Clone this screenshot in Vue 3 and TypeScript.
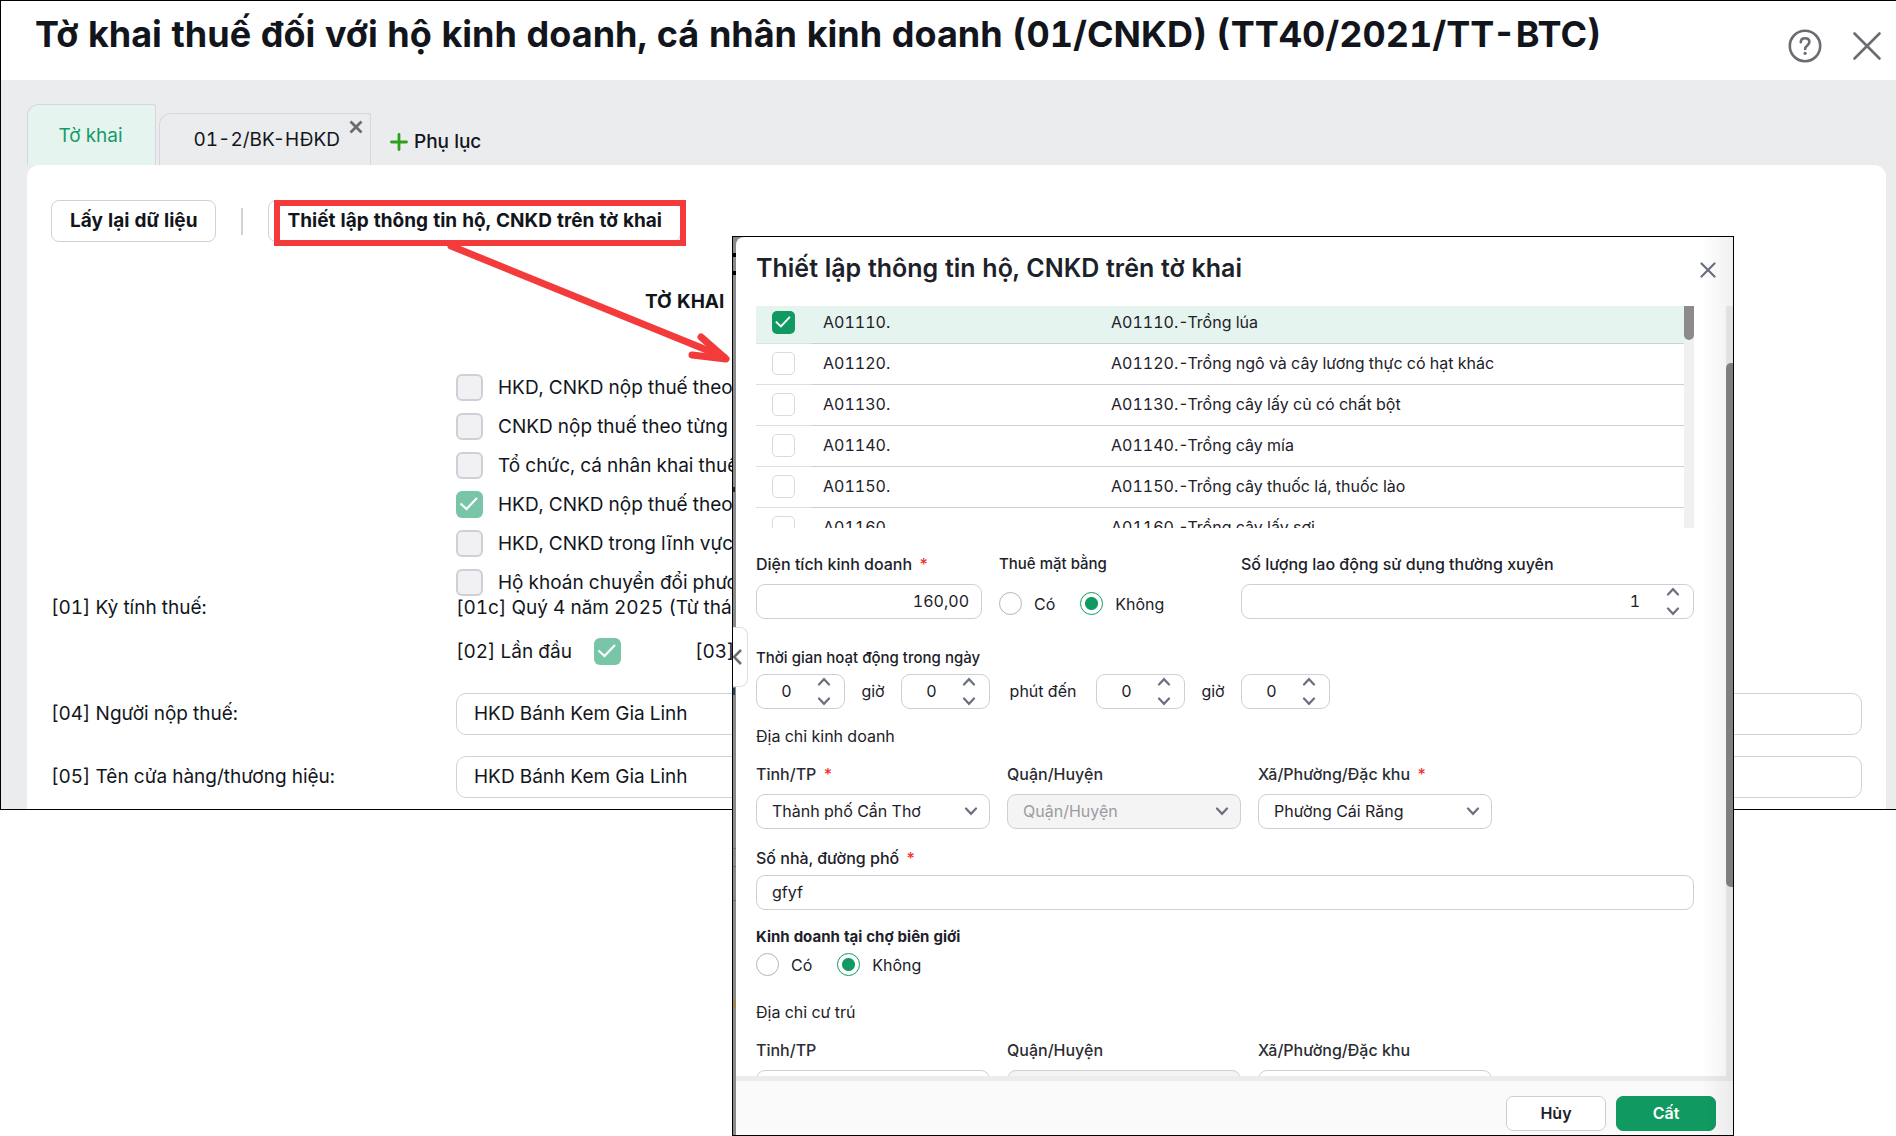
<script setup lang="ts">
import { ref } from 'vue'

interface Option {
  label: string
  checked: boolean
}

interface Industry {
  code: string
  name: string
  checked: boolean
}

const declarationTypes = ref<Option[]>([
  { label: 'HKD, CNKD nộp thuế theo', checked: false },
  { label: 'CNKD nộp thuế theo từng', checked: false },
  { label: 'Tổ chức, cá nhân khai thuế', checked: false },
  { label: 'HKD, CNKD nộp thuế theo', checked: true },
  { label: 'HKD, CNKD trong lĩnh vực', checked: false },
  { label: 'Hộ khoán chuyển đổi phương', checked: false },
])

const industries = ref<Industry[]>([
  { code: 'A01110.', name: 'A01110.-Trồng lúa', checked: true },
  { code: 'A01120.', name: 'A01120.-Trồng ngô và cây lương thực có hạt khác', checked: false },
  { code: 'A01130.', name: 'A01130.-Trồng cây lấy củ có chất bột', checked: false },
  { code: 'A01140.', name: 'A01140.-Trồng cây mía', checked: false },
  { code: 'A01150.', name: 'A01150.-Trồng cây thuốc lá, thuốc lào', checked: false },
  { code: 'A01160.', name: 'A01160.-Trồng cây lấy sợi', checked: false },
])

const taxpayer = ref('HKD Bánh Kem Gia Linh')
const shopName = ref('HKD Bánh Kem Gia Linh')
const area = ref('160,00')
const rent = ref('no')
const border = ref('no')
const workers = ref(1)
const street = ref('gfyf')

const hours = ref([
  { value: 0, unit: 'giờ', name: 'Giờ bắt đầu' },
  { value: 0, unit: 'phút đến', name: 'Phút bắt đầu' },
  { value: 0, unit: 'giờ', name: 'Giờ kết thúc' },
  { value: 0, unit: '', name: 'Phút kết thúc' },
])
</script>

<template>
  <div class="page">
    <main class="window">
      <header class="window-head">
        <h1>Tờ khai thuế đối với hộ kinh doanh, cá nhân kinh doanh (01/CNKD) (TT40/2021/TT-BTC)</h1>
        <div class="window-tools">
          <button class="icon-btn" aria-label="Trợ giúp">
            <svg width="34" height="34" viewBox="0 0 34 34" fill="none" stroke="#6b6c72" stroke-width="2.6">
              <circle cx="17" cy="17" r="15.2" />
              <path d="M12.8 13.2c0-2.500 1.800-4 4.300-4s4.300 1.500 4.300 3.900c0 3.200-4.300 3.500-4.300 6.900" stroke-linecap="round" />
              <circle cx="17.100" cy="24.300" r="1.600" fill="#6b6c72" stroke="none" />
            </svg>
          </button>
          <button class="icon-btn" aria-label="Đóng">
            <svg width="30" height="30" viewBox="0 0 30 30" fill="none" stroke="#6b6c72" stroke-width="2.600" stroke-linecap="round">
              <path d="M2.500 2.500 27.500 27.500M27.500 2.500 2.500 27.500" />
            </svg>
          </button>
        </div>
      </header>

      <nav class="tabs">
        <button class="tab active">Tờ khai</button>
        <div class="tab second">
          <button class="tab-name">01-2/BK-HĐKD</button>
          <button class="tab-close" aria-label="Đóng phụ lục">
            <svg width="14" height="14" viewBox="0 0 14 14" stroke="#6b6c72" stroke-width="2.800">
              <path d="M1.500 1.500 12.500 12.500M12.500 1.500 1.500 12.500" />
            </svg>
          </button>
        </div>
        <button class="add-tab">
          <svg width="18" height="18" viewBox="0 0 18 18" stroke="#2ca01c" stroke-width="2.800" stroke-linecap="round">
            <path d="M9 1.500V16.500M1.500 9H16.500" />
          </svg>
          Phụ lục
        </button>
      </nav>

      <section class="sheet">
        <div class="toolbar">
          <button class="btn">Lấy lại dữ liệu</button>
          <span class="divider"></span>
          <button class="btn">Thiết lập thông tin hộ, CNKD trên tờ khai</button>
        </div>

        <h2>TỜ KHAI</h2>

        <div class="sheet-grid types">
          <div class="type-list">
            <label v-for="(t, i) in declarationTypes" :key="i" class="type">
              <input v-model="t.checked" type="checkbox" class="tick muted" />
              <span>{{ t.label }}</span>
            </label>
          </div>
        </div>
        <div class="sheet-grid">
          <span>[01] Kỳ tính thuế:</span>
          <span>[01c] Quý 4 năm 2025 (Từ tháng</span>
        </div>
        <div class="sheet-grid first-time">
          <div class="first-row">
            <label for="first">[02] Lần đầu</label>
            <input id="first" type="checkbox" class="tick muted" checked />
            <span class="nth">[03]</span>
          </div>
        </div>
        <div class="sheet-grid payer">
          <label for="payer">[04] Người nộp thuế:</label>
          <input id="payer" v-model="taxpayer" class="text-box" type="text" />
        </div>
        <div class="sheet-grid shop">
          <label for="shop">[05] Tên cửa hàng/thương hiệu:</label>
          <input id="shop" v-model="shopName" class="text-box" type="text" />
        </div>
      </section>
    </main>

    <div class="highlight"></div>
    <svg class="arrow" width="300" height="130" viewBox="0 0 300 130" fill="none" stroke="#f43b3b">
      <path d="M11 6 284 117" stroke-width="7" stroke-linecap="round" />
      <path d="M261 97 286 119 252 115" stroke-width="7" stroke-linecap="round" stroke-linejoin="round" />
    </svg>

    <div class="modal" role="dialog" aria-labelledby="dialog-title">
      <div class="backdrop-strip"></div>
      <div class="dialog">
        <header class="dialog-head">
          <h2 id="dialog-title">Thiết lập thông tin hộ, CNKD trên tờ khai</h2>
          <button class="icon-btn" aria-label="Đóng hộp thoại">
            <svg width="16" height="16" viewBox="0 0 16 16" stroke="#6b7080" stroke-width="2.200" stroke-linecap="round">
              <path d="M1.500 1.500 14.500 14.500M14.500 1.500 1.500 14.500" />
            </svg>
          </button>
        </header>

        <div class="dialog-body">
          <div class="list">
            <div class="list-view">
              <table>
                <tbody>
                  <tr v-for="row in industries" :key="row.code" :class="{ selected: row.checked }">
                    <td class="c-tick"><input v-model="row.checked" type="checkbox" class="tick small" :aria-label="row.code" /></td>
                    <td class="c-code">{{ row.code }}</td>
                    <td>{{ row.name }}</td>
                  </tr>
                </tbody>
              </table>
            </div>
            <div class="list-scroll"><span></span></div>
          </div>

          <div class="cols facts">
            <div class="field">
              <label for="area" class="cap">Diện tích kinh doanh <i>*</i></label>
              <input id="area" v-model="area" class="box right" type="text" />
            </div>
            <fieldset class="field rent">
              <legend class="cap small-cap">Thuê mặt bằng</legend>
              <div class="radios">
                <label><input v-model="rent" type="radio" name="rent" value="yes" />Có</label>
                <label><input v-model="rent" type="radio" name="rent" value="no" />Không</label>
              </div>
            </fieldset>
            <div class="field">
              <label for="workers" class="cap">Số lượng lao động sử dụng thường xuyên</label>
              <div class="spin wide">
                <input id="workers" v-model="workers" class="box" type="text" />
                <div class="spin-btns">
                  <button aria-label="Tăng" @click="workers++">
                    <svg width="14" height="9" viewBox="0 0 14 9"><path d="M2 7.500 7 2.200 12 7.500" /></svg>
                  </button>
                  <button aria-label="Giảm" @click="workers--">
                    <svg width="14" height="9" viewBox="0 0 14 9"><path d="M2 1.500 7 6.800 12 1.500" /></svg>
                  </button>
                </div>
              </div>
            </div>
          </div>

          <fieldset class="hours">
            <legend class="cap small-cap">Thời gian hoạt động trong ngày</legend>
            <div class="hour-row">
              <template v-for="(h, i) in hours" :key="i">
                <div class="spin">
                  <input v-model="h.value" class="box" type="text" :aria-label="h.name" />
                  <div class="spin-btns">
                    <button aria-label="Tăng" @click="h.value++">
                      <svg width="14" height="9" viewBox="0 0 14 9"><path d="M2 7.500 7 2.200 12 7.500" /></svg>
                    </button>
                    <button aria-label="Giảm" @click="h.value--">
                      <svg width="14" height="9" viewBox="0 0 14 9"><path d="M2 1.500 7 6.800 12 1.500" /></svg>
                    </button>
                  </div>
                </div>
                <span v-if="h.unit" class="unit" :class="{ long: i === 1 }">{{ h.unit }}</span>
              </template>
            </div>
          </fieldset>

          <h3>Địa chỉ kinh doanh</h3>
          <div class="places">
            <div class="field">
              <label for="city" class="cap soft">Tỉnh/TP <i>*</i></label>
              <div class="pick">
                <select id="city"><option>Thành phố Cần Thơ</option></select>
                <svg width="14" height="9" viewBox="0 0 14 9"><path d="M2 1.500 7 6.800 12 1.500" /></svg>
              </div>
            </div>
            <div class="field">
              <label for="district" class="cap soft">Quận/Huyện</label>
              <div class="pick">
                <select id="district" disabled><option>Quận/Huyện</option></select>
                <svg width="14" height="9" viewBox="0 0 14 9"><path d="M2 1.500 7 6.800 12 1.500" /></svg>
              </div>
            </div>
            <div class="field">
              <label for="ward" class="cap soft">Xã/Phường/Đặc khu <i>*</i></label>
              <div class="pick">
                <select id="ward"><option>Phường Cái Răng</option></select>
                <svg width="14" height="9" viewBox="0 0 14 9"><path d="M2 1.500 7 6.800 12 1.500" /></svg>
              </div>
            </div>
          </div>

          <div class="field street">
            <label for="street" class="cap">Số nhà, đường phố <i>*</i></label>
            <input id="street" v-model="street" class="box" type="text" />
          </div>

          <fieldset class="market">
            <legend class="cap small-cap strong">Kinh doanh tại chợ biên giới</legend>
            <div class="radios">
              <label><input v-model="border" type="radio" name="border" value="yes" />Có</label>
              <label><input v-model="border" type="radio" name="border" value="no" />Không</label>
            </div>
          </fieldset>

          <h3 class="residence">Địa chỉ cư trú</h3>
          <div class="places">
            <div class="field">
              <label for="city2" class="cap soft">Tỉnh/TP</label>
              <div class="pick"><select id="city2"></select></div>
            </div>
            <div class="field">
              <label for="district2" class="cap soft">Quận/Huyện</label>
              <div class="pick"><select id="district2" disabled></select></div>
            </div>
            <div class="field">
              <label for="ward2" class="cap soft">Xã/Phường/Đặc khu</label>
              <div class="pick"><select id="ward2"></select></div>
            </div>
          </div>
          <div class="body-scroll"><span></span></div>
        </div>

        <footer class="dialog-foot">
          <button class="action">Hủy</button>
          <button class="action primary">Cất</button>
        </footer>
      </div>
      <button class="collapse" aria-label="Thu gọn">
        <svg width="9" height="18" viewBox="0 0 9 18" fill="none" stroke="#6b6c72" stroke-width="2.600">
          <path d="M8 2 1 9 8 16" />
        </svg>
      </button>
    </div>
  </div>
</template>

<style>
body {
  background: #fff;
}
</style>

<style scoped>
.page,
.page * {
  box-sizing: border-box;
}
.page {
  position: relative;
  min-height: 1136px;
  overflow: hidden;
  font-family: Inter, "Noto Sans", sans-serif;
  font-feature-settings: "tnum";
  font-size: 19px;
  line-height: 24px;
  color: #12161c;
}
button,
input,
select {
  font: inherit;
  font-feature-settings: inherit;
  color: inherit;
}
button {
  padding: 0;
  border: 0;
  background: none;
  cursor: pointer;
}
h1,
h2,
h3,
fieldset,
legend {
  margin: 0;
  padding: 0;
  border: 0;
}
svg {
  display: block;
}

.window {
  border: 1px solid #000;
  border-right: 0;
  background: #ebecee;
}
.window-head {
  display: flex;
  justify-content: space-between;
  height: 79px;
  padding: 11px 14px 0 34px;
  background: #fff;
}
h1 {
  font-size: 36px;
  line-height: 44px;
  font-weight: 700;
  white-space: nowrap;
}
.window-tools {
  display: flex;
  align-items: center;
  gap: 30px;
  height: 68px;
}

.tabs {
  display: flex;
  align-items: flex-end;
  height: 85px;
  padding-left: 26px;
}
.tab {
  border: 1px solid #d4d7dc;
  border-bottom: 0;
  border-radius: 12px 3px 0 0;
}
.tab.active {
  width: 129px;
  height: 61px;
  padding: 2px 2px 0 0;
  margin-right: 3px;
  color: #149c66;
  background: #e5f4ef;
}
.second {
  display: flex;
  align-items: flex-start;
  justify-content: flex-end;
  gap: 9px;
  width: 212px;
  height: 52px;
  padding: 6px 7px 0 0;
}
.tab-name {
  margin-top: 8px;
}
.add-tab {
  display: flex;
  align-items: center;
  gap: 6px;
  height: 47px;
  margin-left: 19px;
  font-weight: 500;
}

.sheet {
  margin-right: 10px;
  margin-left: 26px;
  padding: 35px 24px 11px;
  border-radius: 12px 12px 0 0;
  background: #fff;
}
.toolbar {
  display: flex;
  align-items: center;
}
.btn {
  height: 42px;
  padding: 0 18px;
  border: 1px solid #d0d2d8;
  border-radius: 8px;
  background: #fff;
  font-size: 19px;
  font-weight: 700;
}
.divider {
  width: 2px;
  height: 27px;
  margin: 0 25px;
  background: #d0d2d8;
}
.sheet h2 {
  margin: 48px 0 60px 594px;
  font-size: 19px;
  line-height: 24px;
  font-weight: 700;
}
.sheet-grid {
  display: grid;
  grid-template-columns: 405px 1fr;
  align-items: center;
}
.type-list,
.first-row {
  grid-column: 2;
}
.type-list {
  display: grid;
  gap: 12px;
}
.type {
  display: flex;
  align-items: center;
  gap: 15px;
}
.tick {
  appearance: none;
  flex: none;
  display: block;
  width: 27px;
  height: 27px;
  margin: 0;
  border: 2px solid #cdd0d6;
  border-radius: 6px;
  background: #f1f1f3;
}
.tick:checked {
  border: 0;
  background: #78c5a8 url("data:image/svg+xml,%3Csvg xmlns='http://www.w3.org/2000/svg' viewBox='0 0 27 27' fill='none' stroke='white' stroke-width='2.2'%3E%3Cpath d='M4.500 12.500 10.500 18 21 7'/%3E%3C/svg%3E") center / 100%;
}
.tick.small {
  width: 23px;
  height: 23px;
  border: 1px solid #d9dade;
  border-radius: 5px;
  background-color: #fff;
}
.tick.small:checked {
  border: 0;
  background-color: #109a62;
}
.first-time {
  margin-top: 18px;
}
.first-row {
  display: flex;
  align-items: center;
}
.first-row label {
  width: 138px;
}
.nth {
  margin-left: 74px;
}
.payer {
  margin-top: 28px;
}
.shop {
  margin-top: 21px;
}
.text-box {
  width: 100%;
  height: 42px;
  padding: 0 17px 1px;
  border: 1px solid #d0d2d8;
  border-radius: 10px;
  background: #fff;
}

.highlight {
  position: absolute;
  top: 200px;
  left: 274px;
  width: 412px;
  height: 46px;
  border: 6px solid #f43b3b;
  pointer-events: none;
}
.arrow {
  position: absolute;
  top: 240px;
  left: 440px;
}

.modal {
  position: absolute;
  top: 236px;
  right: 162px;
  bottom: 0;
  left: 732px;
  display: flex;
  border: 1px solid #000;
  background: #8a8a8a;
  font-size: 16px;
  line-height: 20px;
  color: #1d2129;
}
.backdrop-strip {
  width: 3px;
  background:
    linear-gradient(#000, #000) 0 16px / 3px 4px no-repeat,
    linear-gradient(#000, #000) 0 34px / 3px 4px no-repeat,
    linear-gradient(#1c2b3a, #1c2b3a) 0 250px / 2px 5px no-repeat,
    linear-gradient(#2c4257, #2c4257) 0 451px / 2px 7px no-repeat,
    linear-gradient(#6d6d6d, #6d6d6d) 0 611px / 3px 1px no-repeat,
    linear-gradient(#6d6d6d, #6d6d6d) 0 629px / 3px 1px no-repeat,
    linear-gradient(#6d6d6d, #6d6d6d) 0 663px / 3px 1px no-repeat,
    linear-gradient(#a08454, #a08454) 0 763px / 3px 8px no-repeat,
    #8a8a8a;
}
.dialog {
  flex: 1;
  display: flex;
  flex-direction: column;
  min-width: 0;
  border-radius: 8px 0 0 0;
  background: #fff;
}
.modal::after {
  content: "";
  position: absolute;
  top: 0;
  right: 0;
  bottom: 0;
  width: 32px;
  background: linear-gradient(to right, transparent, rgba(0, 0, 0, 0.06));
  pointer-events: none;
}
.dialog-head {
  display: flex;
  justify-content: space-between;
  align-items: center;
  height: 69px;
  padding: 0 17px 7px 20px;
}
.dialog-head h2 {
  font-size: 25px;
  line-height: 32px;
  font-weight: 600;
}
.dialog-head .icon-btn {
  margin-top: 4px;
}
.dialog-body {
  position: relative;
  flex: 1;
  min-height: 0;
  overflow: hidden;
  padding: 0 39px 0 20px;
}
.list {
  display: flex;
  height: 222px;
  overflow: hidden;
}
.list-view {
  flex: 1;
  overflow: hidden;
}
.list-scroll {
  width: 10px;
  background: #f0f0f0;
}
.list-scroll span {
  display: block;
  height: 34px;
  border-radius: 0 0 5px 5px;
  background: #8b8b8b;
}
table {
  width: 100%;
  margin-top: -3px;
  border-collapse: separate;
  border-spacing: 0;
  table-layout: fixed;
}
td {
  height: 41px;
  padding: 0 0 2px;
  border-bottom: 1px solid #cdcfd5;
}
.selected td {
  background: #e5f4ef;
}
.c-tick {
  width: 55px;
  padding-left: 16px;
  border-bottom-color: #dfe0e4;
}
.c-code {
  width: 300px;
  padding-left: 12px;
}

.cols {
  display: grid;
  grid-template-columns: 226px 225px 1fr;
  gap: 17px;
  margin-top: 26px;
}
.cap {
  display: block;
  margin-bottom: 10px;
  font-weight: 500;
}
.cap.soft {
  color: #2b2d33;
}
.cap i {
  margin-left: 2px;
  color: #f0322c;
  font-style: normal;
}
.small-cap {
  margin-bottom: 6px;
  font-size: 15px;
}
.strong {
  font-weight: 700;
}
.rent {
  padding-top: 5px;
}
.rent .small-cap {
  margin-bottom: 13px;
}
.box {
  display: block;
  width: 100%;
  height: 35px;
  padding: 0 15px 2px;
  border: 1px solid #cdcfd5;
  border-radius: 9px;
  background: #fff;
}
.right {
  padding-right: 12px;
  text-align: right;
}
.radios {
  display: flex;
  gap: 25px;
}
.radios label {
  display: flex;
  align-items: center;
  gap: 12px;
}
.radios input {
  appearance: none;
  width: 23px;
  height: 23px;
  margin: 0;
  border: 1px solid #b4b4b6;
  border-radius: 50%;
  background: #fff;
}
.radios input:checked {
  border-color: #109a62;
  background: radial-gradient(circle, #109a62 6px, #fff 7px);
}
.spin {
  position: relative;
  width: 89px;
}
.spin .box {
  padding: 0 28px 2px 0;
  text-align: center;
}
.spin.wide {
  width: 100%;
}
.spin.wide .box {
  padding-right: 53px;
  text-align: right;
}
.spin-btns {
  position: absolute;
  top: 3px;
  right: 14px;
  display: grid;
  gap: 11px;
}
.dialog-body svg {
  fill: none;
  stroke: #6b7080;
  stroke-width: 2.2px;
  stroke-linecap: round;
}
.hours {
  margin-top: 29px;
}
.hour-row {
  display: flex;
  align-items: center;
}
.unit {
  width: 56px;
  padding-bottom: 2px;
  text-align: center;
}
.unit.long {
  width: 106px;
}
h3 {
  margin: 17px 0 18px;
  font-size: 16px;
  font-weight: 400;
}
.places {
  display: grid;
  grid-template-columns: 234px 234px 234px;
  gap: 17px;
}
.pick {
  position: relative;
}
.pick select {
  appearance: none;
  display: block;
  width: 100%;
  height: 35px;
  padding: 0 15px 2px;
  border: 1px solid #cdcfd5;
  border-radius: 9px;
  background: #fff;
  opacity: 1;
}
.pick select:disabled {
  color: #9b9ca0;
  background: #f4f4f4;
}
.pick svg {
  position: absolute;
  top: 13px;
  right: 12px;
  pointer-events: none;
}
.street {
  margin-top: 19px;
}
.street .cap {
  margin-bottom: 7px;
}
.market {
  margin-top: 17px;
}
.market .cap {
  margin-bottom: 6px;
}
.residence {
  margin-top: 26px;
}
.body-scroll {
  position: absolute;
  top: 0;
  right: 0;
  bottom: 0;
  width: 7px;
  padding-top: 57px;
  background: #ededee;
}
.body-scroll span {
  display: block;
  height: 524px;
  border-radius: 5px 0 0 5px;
  background: #858585;
}
.dialog-foot {
  display: flex;
  justify-content: flex-end;
  gap: 10px;
  height: 59px;
  padding: 15px 17px 0 0;
  border-top: 5px solid #ebecee;
  background: #fafafa;
}
.action {
  width: 100px;
  height: 35px;
  padding-bottom: 2px;
  border: 1px solid #cdcfd5;
  border-radius: 7px;
  background: #fff;
  font-weight: 600;
}
.primary {
  border-color: #109a62;
  background: #109a62;
  color: #fff;
}
.collapse {
  position: absolute;
  top: 390px;
  left: 0;
  width: 15px;
  height: 60px;
  border: 1px solid #dfe0e6;
  border-left: 0;
  border-radius: 0 8px 8px 0;
  background: #fff;
}
</style>
